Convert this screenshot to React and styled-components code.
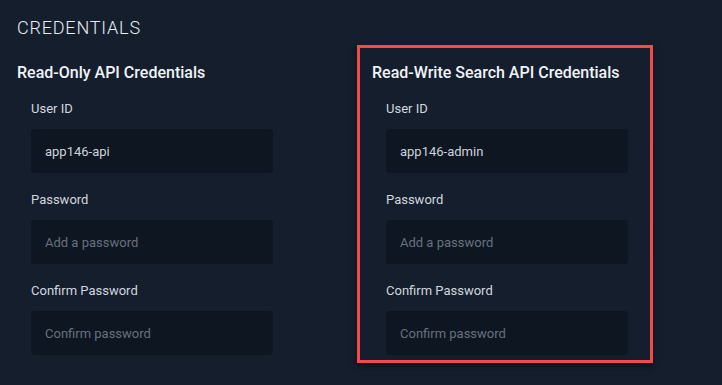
import React from "react";
import styled, { createGlobalStyle } from "styled-components";

const GlobalStyle = createGlobalStyle`
  html, body {
    margin: 0;
    padding: 0;
    background: #141e2d;
    font-family: Roboto, "Liberation Sans", sans-serif;
  }
`;

const credentials = [
  {
    title: "Read-Only API Credentials",
    user: "app146-api",
  },
  {
    title: "Read-Write Search API Credentials",
    user: "app146-admin",
    highlight: true,
  },
];

const Field = ({ label, value, placeholder }) => (
  <FieldWrap>
    <Label>{label}</Label>
    <Input defaultValue={value} placeholder={placeholder} />
  </FieldWrap>
);

export default function App() {
  return (
    <>
      <GlobalStyle />
      <Page>
        <Title>CREDENTIALS</Title>
        <Columns>
          {credentials.map((item) => (
            <Column key={item.title} $highlight={item.highlight}>
              <Heading>{item.title}</Heading>
              <Field label="User ID" value={item.user} />
              <Field label="Password" placeholder="Add a password" />
              <Field label="Confirm Password" placeholder="Confirm password" />
            </Column>
          ))}
        </Columns>
      </Page>
    </>
  );
}

const Page = styled.div`
  width: 722px;
  height: 385px;
  box-sizing: border-box;
  padding: 17px 0 0 2px;
  background: #141e2d;
  overflow: hidden;
`;

const Title = styled.h2`
  margin: 0 0 6px 15px;
  font-size: 18px;
  line-height: 22px;
  font-weight: 300;
  color: #e8ecf1;
  letter-spacing: 0.8px;
`;

const Columns = styled.div`
  display: flex;
  gap: 59px;
`;

const Column = styled.section`
  display: flex;
  flex-direction: column;
  width: 296px;
  box-sizing: border-box;
  padding: 15px 22px 5px 12px;
  border: 3px solid ${(p) => (p.$highlight ? "#f44a4a" : "transparent")};
  box-shadow: ${(p) => (p.$highlight ? "0 3px 8px rgba(0, 0, 0, 0.45)" : "none")};
`;

const Heading = styled.h3`
  margin: 0 0 17px;
  font-size: 16px;
  line-height: 20px;
  font-weight: 500;
  color: #f1f3f6;
  white-space: nowrap;
`;

const FieldWrap = styled.div`
  display: flex;
  flex-direction: column;
  padding-left: 14px;
  margin-bottom: 18px;
  &:last-child {
    margin-bottom: 0;
  }
`;

const Label = styled.label`
  font-size: 13px;
  line-height: 16px;
  font-weight: 400;
  color: #d3d7dd;
  margin: 1px 0 12px;
`;

const Input = styled.input`
  width: 242px;
  height: 44px;
  box-sizing: border-box;
  border: 0;
  border-radius: 4px;
  padding: 0 14px;
  background: #0e1622;
  color: #cdd2d9;
  font-family: Roboto, "Liberation Sans", sans-serif;
  font-size: 13px;
  outline: none;
  &::placeholder {
    color: #68717d;
  }
`;
